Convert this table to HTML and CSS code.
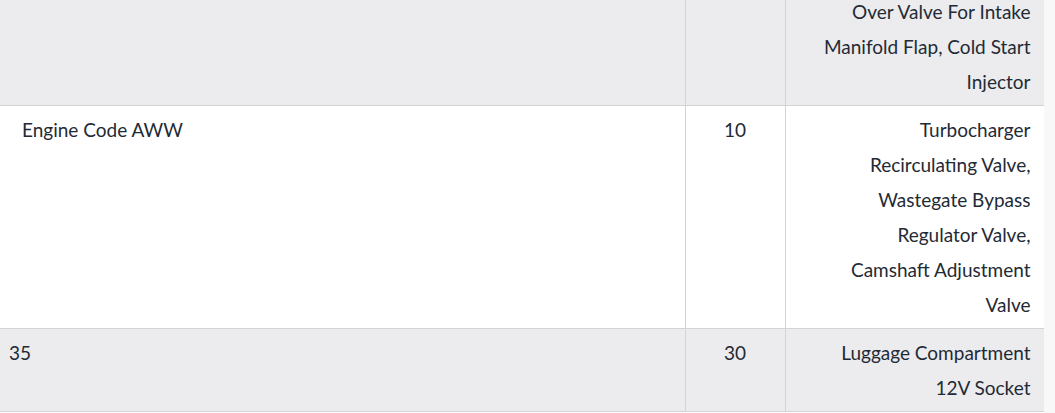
FILE: index.html
```html
<!DOCTYPE html>
<html>
<head>
<meta charset="utf-8">
<link rel="stylesheet" href="styles.css">
</head>
<body>
<div class="page">
  <div class="viewport">
    <table class="fuse-table">
      <colgroup>
        <col class="c-desc">
        <col class="c-amp">
        <col class="c-name">
      </colgroup>
      <tbody>
        <tr class="row-alt">
          <td class="cell-first"></td>
          <td class="cell-num"></td>
          <td class="cell-name">Over Valve For Intake<br>Manifold Flap, Cold Start<br>Injector</td>
        </tr>
        <tr>
          <td class="cell-first cell-indent">Engine Code AWW</td>
          <td class="cell-num">10</td>
          <td class="cell-name">Turbocharger<br>Recirculating Valve,<br>Wastegate Bypass<br>Regulator Valve,<br>Camshaft Adjustment<br>Valve</td>
        </tr>
        <tr class="row-alt">
          <td class="cell-first">35</td>
          <td class="cell-num">30</td>
          <td class="cell-name">Luggage Compartment<br>12V Socket</td>
        </tr>
      </tbody>
    </table>
  </div>
  <div class="scrollbar"></div>
</div>
</body>
</html>
```

FILE: styles.css
```css
html, body {
  margin: 0;
  padding: 0;
  background: #ffffff;
}

.page {
  display: flex;
  width: 1055px;
  height: 413px;
  overflow: hidden;
}

.viewport {
  width: 1044px;
  overflow: hidden;
}

.scrollbar {
  flex: 1;
  background: #f8f8f8;
}

.fuse-table {
  width: 1044px;
  margin-top: -12px;
  border-collapse: collapse;
  table-layout: fixed;
  font-family: "Lato", "Open Sans", sans-serif;
  font-size: 19px;
  line-height: 35px;
  color: #232a35;
}

.c-desc { width: 685px; }
.c-amp { width: 100px; }
.c-name { width: 259px; }

.fuse-table td {
  vertical-align: top;
  padding: 6px 12px 6px 9px;
  border-right: 1px solid #d3d3d5;
  border-bottom: 1px solid #d3d3d5;
  background: #ffffff;
}

.fuse-table tr.row-alt td {
  background: #ececee;
}

.fuse-table td.cell-indent {
  padding-left: 22px;
}

.fuse-table td.cell-num {
  text-align: center;
  padding-left: 0;
  padding-right: 0;
}

.fuse-table td.cell-name {
  text-align: right;
  white-space: nowrap;
  padding-right: 13px;
}
```
